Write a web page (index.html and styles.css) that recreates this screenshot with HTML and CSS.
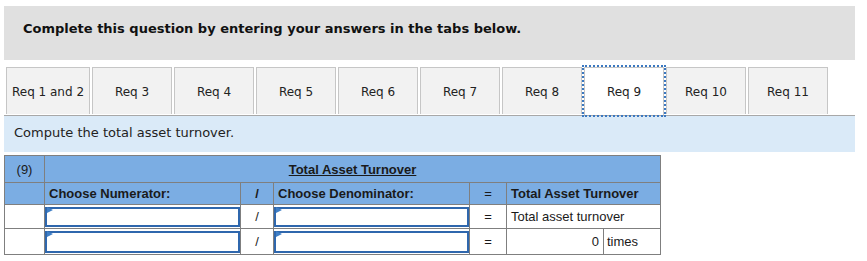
FILE: index.html
```html
<!DOCTYPE html>
<html lang="en">
<head>
<meta charset="utf-8">
<title>Total Asset Turnover</title>
<link rel="stylesheet" href="styles.css">
</head>
<body>
<div class="page">
  <div class="prompt">Complete this question by entering your answers in the tabs below.</div>
  <div class="tabs">
    <div class="tab tab-wide">Req 1 and 2</div>
    <div class="tab">Req 3</div>
    <div class="tab">Req 4</div>
    <div class="tab">Req 5</div>
    <div class="tab">Req 6</div>
    <div class="tab">Req 7</div>
    <div class="tab">Req 8</div>
    <div class="tab tab-active">Req 9</div>
    <div class="tab">Req 10</div>
    <div class="tab">Req 11</div>
  </div>
  <div class="instr">Compute the total asset turnover.</div>
  <table class="grid">
    <colgroup>
      <col class="c-num">
      <col class="c-input">
      <col class="c-op">
      <col class="c-input">
      <col class="c-eq">
      <col class="c-val">
      <col class="c-unit">
    </colgroup>
    <tr class="row-title">
      <td class="center">(9)</td>
      <td colspan="6" class="center"><span class="title">Total Asset Turnover</span></td>
    </tr>
    <tr class="row-head">
      <td></td>
      <td class="bold">Choose Numerator:</td>
      <td class="center bold">/</td>
      <td class="bold">Choose Denominator:</td>
      <td class="center">=</td>
      <td colspan="2" class="bold">Total Asset Turnover</td>
    </tr>
    <tr class="row-body">
      <td></td>
      <td class="in-cell"><span class="field"></span><span class="tri"></span></td>
      <td class="center">/</td>
      <td class="in-cell"><span class="field"></span><span class="tri"></span></td>
      <td class="center">=</td>
      <td colspan="2">Total asset turnover</td>
    </tr>
    <tr class="row-body row-last">
      <td></td>
      <td class="in-cell"><span class="field"></span><span class="tri"></span></td>
      <td class="center">/</td>
      <td class="in-cell"><span class="field"></span><span class="tri"></span></td>
      <td class="center">=</td>
      <td class="right">0</td>
      <td class="unit">times</td>
    </tr>
  </table>
</div>
</body>
</html>
```

FILE: styles.css
```css
html, body {
  margin: 0;
  padding: 0;
  background: #ffffff;
}

.page {
  margin: 6px 12px 0 4px;
  font-family: "DejaVu Sans", Verdana, sans-serif;
  color: #1a1a1a;
}

.prompt {
  box-sizing: border-box;
  height: 54px;
  background: #e0e0e0;
  padding: 15px 19px 0 19px;
  font-size: 13px;
  line-height: 16px;
  font-weight: bold;
  color: #111;
}

.tabs {
  display: flex;
  gap: 2px;
  margin-top: 7px;
  padding-left: 2px;
}

.tab {
  box-sizing: border-box;
  width: 80px;
  height: 47px;
  background: #f2f2f2;
  border: 1px solid #c6c6c6;
  border-bottom: none;
  display: flex;
  align-items: center;
  justify-content: center;
  font-size: 12px;
  color: #222;
  padding-top: 2px;
}

.tab-wide {
  width: 84px;
}

.tab-active {
  background: #ffffff;
  outline: 2px dotted #3b78c0;
  position: relative;
  z-index: 1;
  height: 48px;
  padding-top: 1px;
}

.instr {
  box-sizing: border-box;
  height: 37px;
  background: #daeaf8;
  border-top: 1px solid #a8a8a8;
  padding: 9px 0 0 10px;
  font-size: 13px;
  line-height: 16px;
  color: #222;
}

.grid {
  margin-top: 3px;
  border-collapse: collapse;
  table-layout: fixed;
  width: 657px;
  font-family: "Liberation Sans", Arial, sans-serif;
  font-size: 13px;
  color: #1a1a1a;
}

.c-num { width: 40px; }
.c-input { width: 196px; }
.c-op { width: 33px; }
.c-eq { width: 37px; }
.c-val { width: 97px; }
.c-unit { width: 57px; }

.grid td {
  border: 1px solid #7f7f7f;
  padding: 0 4px;
  white-space: nowrap;
  overflow: hidden;
  line-height: 15px;
}

.row-title td,
.row-head td {
  background: #7badE3;
}

.row-title td {
  height: 26px;
}

.row-head td {
  height: 21px;
}

.row-body td {
  height: 21px;
  background: #ffffff;
}

.row-last td {
  height: 23px;
}

.center { text-align: center; }
.right { text-align: right; }
.bold { font-weight: bold; }

.title {
  font-weight: bold;
  text-decoration: underline;
}

.grid td.in-cell {
  padding: 1px 0;
  position: relative;
}

.field {
  display: block;
  box-sizing: border-box;
  height: 20px;
  border: 2px solid #2f67ad;
  background: #ffffff;
}

.row-last .field {
  height: 22px;
}

.tri {
  position: absolute;
  top: 2px;
  left: 2px;
  width: 0;
  height: 0;
  border-left: 6px solid #3f7fc6;
  border-top: 3px solid transparent;
  border-bottom: 3px solid transparent;
}

.grid td.unit {
  padding-left: 3px;
}
```
